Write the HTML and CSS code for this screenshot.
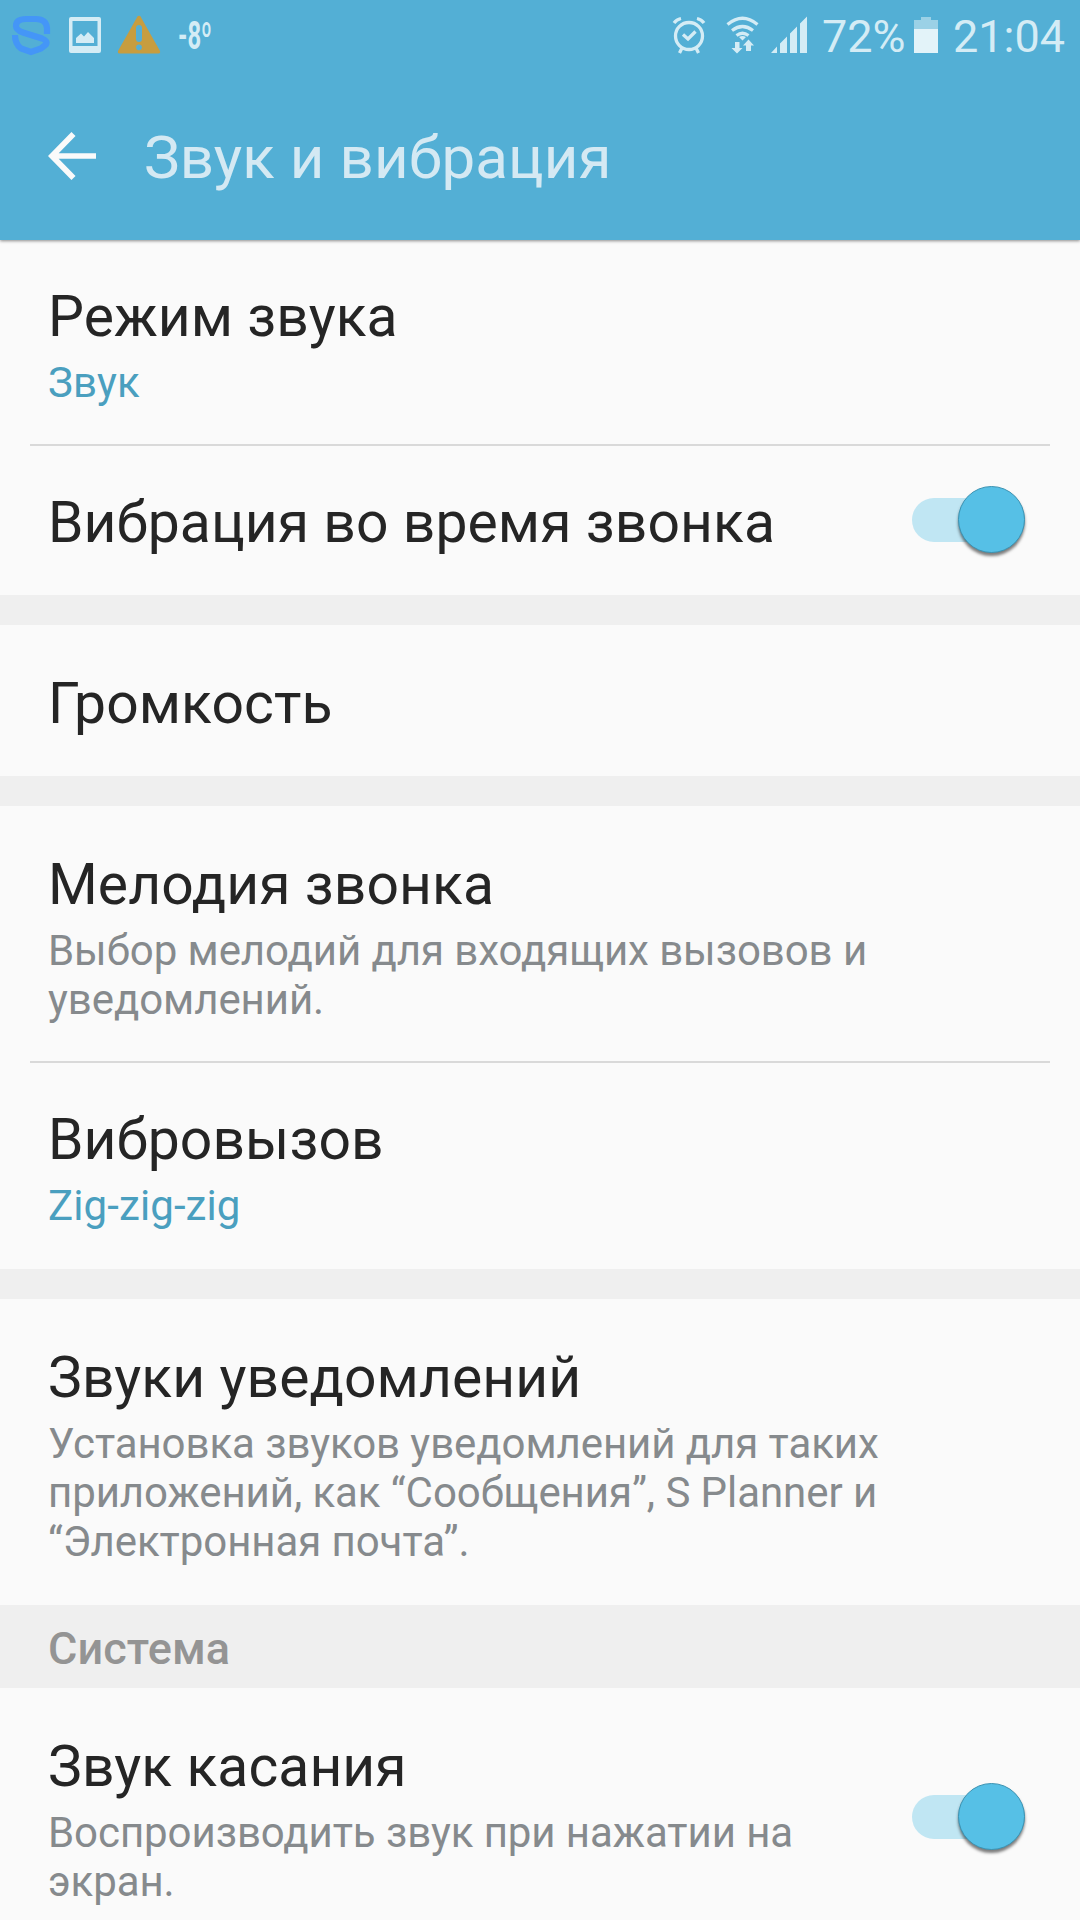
FILE: index.html
```html
<!DOCTYPE html>
<html lang="ru">
<head>
  <meta charset="UTF-8" />
  <meta name="viewport" content="width=device-width, initial-scale=1.0" />
  <title>Звук и вибрация</title>
  <link rel="stylesheet" href="styles.css">
</head>
<body>
  <header class="header">
    <div class="status-bar">
      <svg class="status-left" width="230" height="72" viewBox="0 0 230 72">
        <path d="M47 34V28Q46 19 36 19H26Q16 19 16 26Q16 30 23 32.500L42 38.500Q48 41 46 44.500L41 48.500 31 52 21 48.500Q15 44 15 35" fill="none" stroke="#4496f7" stroke-width="6.200"/>
        <path fill="#d4ecf5" fill-rule="evenodd" d="M71 17h28a2 2 0 0 1 2 2v32a2 2 0 0 1-2 2H71a2 2 0 0 1-2-2V19a2 2 0 0 1 2-2zM72.500 21v25h25V21z"/>
        <path fill="#d4ecf5" d="M76 43v-5l5-4.500 3 3 4-4.500 6 6v5z"/>
        <path fill="#c79d3f" d="M137.500 16.500q1.500-1.500 3 0L160 51q.5 2.500-1.500 2.500h-39q-2 0-1.500-2.500z"/>
        <path d="M139 28v11" stroke="#53afd5" stroke-width="6" stroke-linecap="round"/>
        <circle cx="139" cy="47.300" r="2.900" fill="#53afd5"/>
        <text class="temp" x="178" y="49" textLength="34" lengthAdjust="spacingAndGlyphs">-8º</text>
      </svg>
      <div class="status-right">
        <svg width="150" height="72" viewBox="660 0 150 72">
          <g fill="none" stroke="#d4ecf5" stroke-width="3.300">
            <circle cx="689" cy="36" r="13.500"/>
            <path d="M683 34.500l5 4.500 7.500-7.500M674 23q2.500-3.500 7-4.500M704 23q-2.500-3.500-7-4.500"/>
            <path d="M682 48l-2.500 5M696 48l2.500 5"/>
            <path stroke-width="3.200" d="M727.500 24.500q15-12.500 30 0M732 30.500q10.500-8 21 0M736.500 35.500q6-4.500 12 0"/>
          </g>
          <path fill="#d4ecf5" d="M739 37q3.500-2 7 0l-3.500 3.500zM735 42h4.500v6h3L737 53.500 731.500 48h3.500zM746 51V45.500h-3l5.500-6 5.500 6h-3V51z"/>
          <path fill="#d4ecf5" d="M771 53h6V46.500zM780 53h7V36.500l-7 7zM790 53h7V26.500l-7 7zM800 53h7V16.500l-7 7z"/>
        </svg>
        <span class="percent">72%</span>
        <svg class="battery" width="24" height="36" viewBox="0 0 24 36">
          <path fill="#9bd1e6" d="M0 3h7V0h10v3h7v9H0z"/>
          <path fill="#e3f3f9" d="M0 12h24v24H0z"/>
        </svg>
        <span class="time">21:04</span>
      </div>
    </div>
    <div class="app-bar">
      <svg class="back" width="50" height="52" viewBox="0 0 50 52">
        <path d="M25.500 4L4 26l21.500 22M4 26h44" fill="none" stroke="#fafafa" stroke-width="5.700"/>
      </svg>
      <h1>Звук и вибрация</h1>
    </div>
  </header>

  <main>
    <section class="group">
      <div class="row tight">
        <div class="text">
          <h2>Режим звука</h2>
          <p class="value">Звук</p>
        </div>
      </div>
      <hr>
      <div class="row tight single">
        <h2>Вибрация во время звонка</h2>
        <div class="switch"><span class="thumb"></span></div>
      </div>
    </section>

    <section class="group">
      <div class="row single">
        <h2>Громкость</h2>
      </div>
    </section>

    <section class="group">
      <div class="row">
        <div class="text">
          <h2>Мелодия звонка</h2>
          <p>Выбор мелодий для входящих вызовов и<br>уведомлений.</p>
        </div>
      </div>
      <hr>
      <div class="row tight last">
        <div class="text">
          <h2>Вибровызов</h2>
          <p class="value">Zig-zig-zig</p>
        </div>
      </div>
    </section>

    <section class="group">
      <div class="row last">
        <div class="text">
          <h2>Звуки уведомлений</h2>
          <p>Установка звуков уведомлений для таких<br>приложений, как “Сообщения”, S Planner и<br>“Электронная почта”.</p>
        </div>
      </div>
    </section>

    <h3 class="category">Система</h3>

    <section class="group">
      <div class="row">
        <div class="text">
          <h2>Звук касания</h2>
          <p>Воспроизводить звук при нажатии на<br>экран.</p>
        </div>
        <div class="switch"><span class="thumb"></span></div>
      </div>
    </section>
  </main>
</body>
</html>
```
FILE: styles.css
```css
* {
  margin: 0;
  padding: 0;
  box-sizing: border-box;
}
body, html {
  height: 100%;
  overflow: hidden;
}
body {
  background: #fafafa;
  color: #252525;
  font-family: Roboto, 'Noto Sans', sans-serif;
}
svg {
  display: block;
  flex-shrink: 0;
}
.header {
  position: relative;
  height: 240px;
  background: #53afd5;
  box-shadow: 0 1px 3px rgba(0, 0, 0, 0.45);
}
.status-bar {
  display: flex;
  justify-content: space-between;
  height: 72px;
  padding-right: 16px;
  color: #d4ecf5;
}
.status-right {
  display: flex;
  align-items: flex-start;
  font-size: 45px;
  line-height: 54px;
  padding-top: 9px;
}
.status-right svg:first-child {
  margin-top: -9px;
}
.percent {
  width: 92px;
  padding: 1px 0 0 12px;
  white-space: nowrap;
}
.battery {
  margin: 8px 0 0 12px;
}
.time {
  width: 126px;
  padding: 1px 0 0 15px;
  white-space: nowrap;
}
.temp {
  fill: #d4ecf5;
  font-size: 38px;
  font-weight: 700;
}
.app-bar {
  display: flex;
  align-items: center;
  height: 168px;
  padding: 0 0 0 48px;
}
.app-bar h1 {
  margin: 4px 0 0 46px;
  font-size: 60px;
  font-weight: 400;
  line-height: 70px;
  letter-spacing: 0.1px;
  color: #d4e9f3;
}
.group + .group {
  border-top: 30px solid #efefef;
}
hr {
  height: 2px;
  margin: 0 30px;
  border: none;
  background: #d9d9d9;
}
.row {
  display: flex;
  align-items: center;
  justify-content: space-between;
  padding: 45px 55px 37px 48px;
}
.row.single,
.row.last {
  padding-bottom: 39px;
}
.row.tight {
  padding-top: 43px;
}
h2 {
  font-size: 57px;
  font-weight: 400;
  line-height: 67px;
  letter-spacing: 0.08px;
  white-space: nowrap;
}
p {
  margin-top: 8px;
  font-size: 42px;
  line-height: 49px;
  letter-spacing: -0.07px;
  color: #868a8d;
  white-space: nowrap;
}
p.value {
  letter-spacing: 0.1px;
  color: #4a9fbf;
}
.category {
  height: 83px;
  padding: 17px 48px 0;
  background: #efefef;
  color: #949494;
  font-size: 45px;
  font-weight: 500;
  line-height: 53px;
  letter-spacing: 0.1px;
}
.switch {
  display: flex;
  align-items: center;
  justify-content: flex-end;
  width: 113px;
  height: 44px;
  margin-bottom: 6px;
  border-radius: 22px;
  background: #c0e6f3;
}
.thumb {
  flex-shrink: 0;
  width: 67px;
  height: 67px;
  border: 1px solid #3b93b3;
  border-radius: 50%;
  background: #56c0e6;
  box-shadow: 0 3px 3px rgba(0, 0, 0, 0.5);
}
```
